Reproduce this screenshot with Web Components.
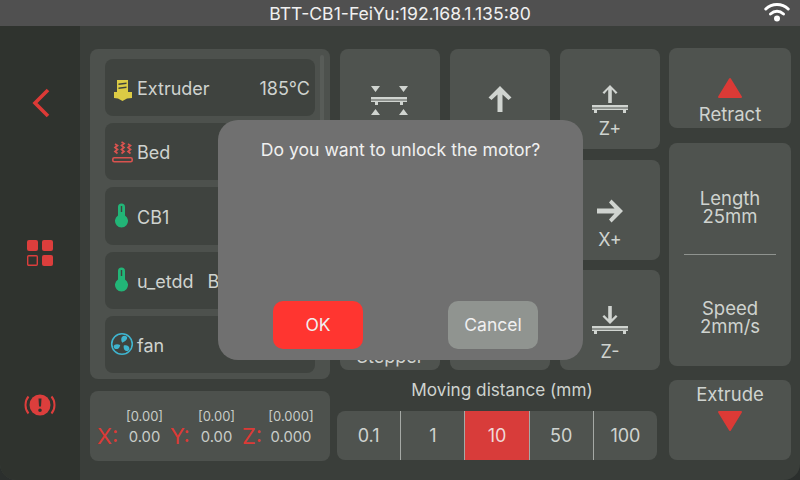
<!DOCTYPE html>
<html>
<head>
<meta charset="utf-8">
<style>
  html, body { margin: 0; padding: 0; background: #2b2f2d; }
  body { width: 800px; height: 480px; overflow: hidden; font-family: "Inter", "Liberation Sans", sans-serif; }
  dialog-box { position: absolute; left: 218px; top: 120px; }
</style>
</head>
<body>
<klipper-screen>
  <status-bar slot="top" title="BTT-CB1-FeiYu:192.168.1.135:80"></status-bar>

  <side-nav slot="nav"></side-nav>

  <panel-box slot="temps" class="temps">
    <temp-row name="Extruder" value="185℃">
      <svg slot="icon" width="24" height="28" viewBox="0 0 24 28"><path fill="#dccb45" d="M8 6h11v12h4v6l-5 .5-4.500 2.500L9 24.500 5 24v-6h3z"/><path fill="#3f433f" d="M9.500 9.500l8-1v1.500l-8 1zM9.500 13.500l8-1v1.500l-8 1z"/></svg>
    </temp-row>
    <temp-row name="Bed">
      <svg slot="icon" width="24" height="28" viewBox="0 0 24 28" fill="none" stroke="#d9534f"><rect x="3.800" y="19.800" width="19.400" height="4" rx="1.500" stroke-width="1.600"/><path stroke-width="1.700" d="M6 6l2.500 1.500L6 9.500l2.500 2L6 13.500l2.500 2M12.500 4l2.500 1.500-2.500 2 2.500 2-2.500 2 2.500 2-2.500 2M19 6l2.500 1.500-2.500 2 2.500 2-2.500 2 2.500 2"/></svg>
    </temp-row>
    <temp-row name="CB1">
      <svg slot="icon" width="24" height="28" viewBox="0 0 24 28"><path fill="#22b577" fill-rule="evenodd" d="M9 5a3.500 3.500 0 0 1 7 0V13.500a6.500 6.500 0 1 1-7 0zM11.800 4h1.400v6h-1.400z"/></svg>
    </temp-row>
    <temp-row name="u_etdd" value="B" inline>
      <svg slot="icon" width="24" height="28" viewBox="0 0 24 28"><path fill="#22b577" fill-rule="evenodd" d="M9 5a3.500 3.500 0 0 1 7 0V13.500a6.500 6.500 0 1 1-7 0zM11.800 4h1.400v6h-1.400z"/></svg>
    </temp-row>
    <temp-row name="fan">
      <svg slot="icon" width="24" height="28" viewBox="0 0 24 28"><circle cx="13" cy="14" r="10.300" fill="none" stroke="#3fb4cf" stroke-width="1.600"/><path fill="#3fb4cf" d="M13.300 12.800C11.500 10 12 5.800 15.500 5.800c3 0 3.500 3 1.300 4.800-1.200 1-2.500 1.400-3.500 2.200zM11.200 15C8.500 13.500 5 14 4.600 16.500c.2 2.500 3 3.300 4.800 2 1.200-.9 1.600-2.400 1.800-3.500zM14.800 15.500c3-.6 6 1 5.600 3.600-.6 2.500-3.800 2.600-5 .6-.8-1.300-.9-3-.6-4.200z"/></svg>
    </temp-row>
  </panel-box>

  <position-box slot="pos"></position-box>

  <move-btn slot="b1">
    <svg width="40" height="36" viewBox="0 0 40 36" fill="#d0d4d0"><path d="M4 1h9l-4.500 6zM32 1h9l-4.500 6zM4 30h9l-4.500-6zM32 30h9l-4.500-6z" transform="translate(-3 0)"/><path d="M1 12h36v2.500H1zM1 15.500h36v1.500H1zM5 17h3v3H5zM30 17h3v3h-3z"/></svg>
  </move-btn>
  <move-btn slot="b2"><svg width="24" height="28" viewBox="0 0 24 28"><path fill="#d0d4d0" d="M12 1l11.500 11.500-3 2.500L14.500 9.500V27h-5V9.500L3.500 15l-3-2.500z"/></svg></move-btn>
  <move-btn slot="b3" label="Z+">
    <svg width="36" height="29" viewBox="0 0 36 29" fill="#d0d4d0"><path d="M18 0l7.500 7.500-1.700 1.500L19.800 4.500V18h-3.600V4.500L12.200 9l-1.700-1.500z"/><path d="M0 20h36v2.500H0zM0 23.500h36V25H0zM2 25h3v3H2zM31 25h3v3h-3z"/></svg>
  </move-btn>
  <move-btn slot="b4"></move-btn>
  <move-btn slot="b5"></move-btn>
  <move-btn slot="b6" label="X+" class="mid" far>
    <svg width="28" height="24" viewBox="0 0 28 24"><path fill="#d0d4d0" d="M27 12L15.500.5 13 3.500 18.500 9.500H1v5h17.500L13 20.500l2.500 3z"/></svg>
  </move-btn>
  <move-btn slot="b7" label="Stepper" low></move-btn>
  <move-btn slot="b8"></move-btn>
  <move-btn slot="b9" label="Z-" far>
    <svg width="36" height="29" viewBox="0 0 36 29" fill="#d0d4d0"><path d="M18 18l7.500-7.500-1.700-1.500-4 4V0h-3.600v13l-4-4-1.700 1.500z"/><path d="M0 20h36v2.500H0zM0 23.500h36V25H0zM2 25h3v3H2zM31 25h3v3h-3z"/></svg>
  </move-btn>

  <distance-bar slot="dist"></distance-bar>

  <extrude-btn slot="retract" label="Retract" dir="up"></extrude-btn>
  <extrude-settings slot="settings"></extrude-settings>
  <extrude-btn slot="extrude" label="Extrude" dir="down"></extrude-btn>
</klipper-screen>

<dialog-box text="Do you want to unlock the motor?"></dialog-box>

<script>
// status bar on top of the screen
class StatusBar extends HTMLElement {
  connectedCallback() {
    const root = this.attachShadow({ mode: 'open' });
    root.innerHTML = `
      <style>
        :host { display: flex; align-items: center; justify-content: center; height: 26px; background: #505050; color: #f0f0f0; font-size: 17.600px; position: relative; }
        svg { position: absolute; right: 10px; top: 1px; }
      </style>
      <span>${this.getAttribute('title')}</span>
      <svg width="26" height="22" viewBox="0 0 26 22" fill="none" stroke="#fff" stroke-width="3" stroke-linecap="round">
        <path d="M1.800 8C8 2 18 2 24.200 8"/>
        <path d="M6.500 13c4-3.600 9-3.600 13 0"/>
        <circle cx="13" cy="17.500" r="3" fill="#fff" stroke="none"/>
      </svg>`;
  }
}
customElements.define('status-bar', StatusBar);

class SideNav extends HTMLElement {
  connectedCallback() {
    const root = this.attachShadow({ mode: 'open' });
    root.innerHTML = `
      <style>
        :host { display: flex; flex-direction: column; align-items: center; width: 80px; height: 454px; background: #2f332e; border-bottom-left-radius: 16px; box-sizing: border-box; padding-top: 62px; }
        svg { display: block; }
        .back { margin-left: 2px; }
        .grid { margin-top: 122px; }
        .warn { margin-top: 127px; }
      </style>
      <svg class="back" width="20" height="30" viewBox="0 0 20 30" fill="none" stroke="#dc3a36" stroke-width="3.600"><path d="M17 2L4 15l13 13"/></svg>
      <svg class="grid" width="26" height="26" viewBox="0 0 26 26">
        <rect x="0" y="0" width="11" height="11" rx="2" fill="#dc3e3c"/>
        <rect x="15" y="0" width="11" height="11" rx="2" fill="#dc3e3c"/>
        <rect x=".7" y="15.700" width="9.600" height="9.600" rx="1" fill="none" stroke="#dc3e3c" stroke-width="1.400"/>
        <rect x="15" y="15" width="11" height="11" rx="2" fill="#dc3e3c"/>
      </svg>
      <svg class="warn" width="32" height="24" viewBox="0 0 32 24">
        <circle cx="16" cy="12" r="10.500" fill="#dc3e3c"/>
        <path d="M14.500 5.500h3l-.5 8h-2zM16 15.500a1.800 1.800 0 1 1 0 3.600 1.800 1.800 0 0 1 0-3.600z" fill="#2f332e"/>
        <path d="M4.500 3.500C.5 8 .5 16 4.500 20.500M27.500 3.500c4 4.500 4 12.500 0 17" fill="none" stroke="#dc3e3c" stroke-width="2"/>
      </svg>`;
  }
}
customElements.define('side-nav', SideNav);

// the panel that holds the temperature rows
class PanelBox extends HTMLElement {
  connectedCallback() {
    const root = this.attachShadow({ mode: 'open' });
    root.innerHTML = `
      <style>
        :host { display: flex; gap: 5px; width: 240px; height: 330px; box-sizing: border-box; background: #4d514d; border-radius: 8px; padding: 6px 6px 6px 15px; }
        .rows { display: flex; flex-direction: column; gap: 7px; padding-top: 4px; width: 210px; }
        .bar { width: 4px; height: 100px; background: #585c58; border-radius: 2px; }
      </style>
      <div class="rows"><slot></slot></div>
      <div class="bar"></div>`;
  }
}
customElements.define('panel-box', PanelBox);

class TempRow extends HTMLElement {
  connectedCallback() {
    const root = this.attachShadow({ mode: 'open' });
    const value = this.getAttribute('value') || '';
    root.innerHTML = `
      <style>
        :host { display: flex; align-items: center; height: 57.500px; box-sizing: border-box; background: #3f433f; border-radius: 8px; color: #cfd3cf; font-size: 18px; padding: 0 5px 0 4px; }
        .icon { display: block; width: 24px; height: 28px; flex: none; margin-right: 4px; }
        .name { flex: ${this.hasAttribute('inline') ? 'none' : '1'}; position: relative; top: 1px; }
        .value { margin-left: ${this.hasAttribute('inline') ? '14px' : '0'}; position: relative; top: 1px; }
      </style>
      <span class="icon"><slot name="icon"></slot></span>
      <span class="name">${this.getAttribute('name')}</span>
      <span class="value">${value}</span>`;
  }
}
customElements.define('temp-row', TempRow);

class PositionBox extends HTMLElement {
  connectedCallback() {
    const root = this.attachShadow({ mode: 'open' });
    const axes = [['X:', '[0.00]', '0.00', 27, 41], ['Y:', '[0.00]', '0.00', 26, 41], ['Z:', '[0.000]', '0.000', 24, 50]];
    root.innerHTML = `
      <style>
        :host { display: flex; width: 240px; height: 70px; box-sizing: border-box; background: #4d514d; border-radius: 8px; padding: 17px 0 0 7px; color: #c8ccc8; gap: 5px; }
        .axis { display: flex; align-items: flex-end; height: 40px; }
        .label { color: #dc3a36; font-size: 22px; line-height: 24px; }
        .vals { display: flex; flex-direction: column; align-items: center; }
        .target { font-size: 13px; line-height: 19px; }
        .now { font-size: 14.800px; line-height: 22px; }
      </style>
      ${axes.map(a => `<div class="axis"><span class="label" style="width:${a[3]}px">${a[0]}</span><div class="vals" style="width:${a[4]}px"><span class="target">${a[1]}</span><span class="now">${a[2]}</span></div></div>`).join('')}`;
  }
}
customElements.define('position-box', PositionBox);

class MoveBtn extends HTMLElement {
  connectedCallback() {
    const root = this.attachShadow({ mode: 'open' });
    const label = this.getAttribute('label') || '';
    root.innerHTML = `
      <style>
        :host { display: flex; flex-direction: column; align-items: center; justify-content: flex-start; width: 100px; box-sizing: border-box; background: #4f534f; border-radius: 8px; color: #cfd3cf; font-size: 18px; padding-top: 36px; }
        :host([low]) { padding-top: 72px; }
        :host(.mid) { padding-top: 39px; }
        ::slotted(svg) { display: block; }
        span { margin-top: 5px; line-height: 20px; }
        :host([far]) span { margin-top: 7px; }
      </style>
      <slot></slot>
      ${label ? `<span>${label}</span>` : ''}`;
  }
}
customElements.define('move-btn', MoveBtn);

class DistanceBar extends HTMLElement {
  connectedCallback() {
    const root = this.attachShadow({ mode: 'open' });
    const opts = ['0.1', '1', '10', '50', '100'];
    root.innerHTML = `
      <style>
        :host { display: block; width: 320px; margin-left: -3px; color: #cfd3cf; }
        .title { text-align: center; font-size: 17.200px; height: 41px; line-height: 40px; padding-left: 10px; }
        .seg { display: flex; height: 49px; border-radius: 8px; overflow: hidden; background: #4f534f; }
        .seg div { flex: 1; display: flex; align-items: center; justify-content: center; font-size: 18px; border-left: 1px solid #a5a9a5; }
        .seg div:first-child { border-left: 0; }
        .seg .on { background: #d83c3a; color: #f0d8d8; }
      </style>
      <div class="title">Moving distance (mm)</div>
      <div class="seg">${opts.map(o => `<div class="${o === '10' ? 'on' : ''}">${o}</div>`).join('')}</div>`;
  }
}
customElements.define('distance-bar', DistanceBar);

class ExtrudeBtn extends HTMLElement {
  connectedCallback() {
    const root = this.attachShadow({ mode: 'open' });
    const up = this.getAttribute('dir') === 'up';
    const tri = up
      ? '<svg width="26" height="22" viewBox="0 0 26 22"><path fill="#dc3a36" stroke="#dc3a36" stroke-width="2" stroke-linejoin="round" d="M13 2L2 20h22z"/></svg>'
      : '<svg width="26" height="22" viewBox="0 0 26 22"><path fill="#dc3a36" stroke="#dc3a36" stroke-width="2" stroke-linejoin="round" d="M13 20L2 2h22z"/></svg>';
    root.innerHTML = `
      <style>
        :host { display: flex; flex-direction: column; align-items: center; width: 122px; height: 80px; box-sizing: border-box; background: #4f534f; border-radius: 8px; color: #cfd3cf; font-size: 18.500px; padding-top: ${up ? 29 : 3}px; }
        svg { display: block; }
        span { line-height: 22px; margin-top: ${up ? 4 : 0}px; }
      </style>
      ${up ? tri + `<span>${this.getAttribute('label')}</span>` : `<span>${this.getAttribute('label')}</span><div style="height:5px"></div>` + tri}`;
  }
}
customElements.define('extrude-btn', ExtrudeBtn);

class ExtrudeSettings extends HTMLElement {
  connectedCallback() {
    const root = this.attachShadow({ mode: 'open' });
    root.innerHTML = `
      <style>
        :host { display: flex; flex-direction: column; width: 122px; height: 223px; box-sizing: border-box; background: #4f534f; border-radius: 8px; color: #cfd3cf; font-size: 18.500px; text-align: center; line-height: 18px; }
        .part { height: 111px; box-sizing: border-box; display: flex; flex-direction: column; justify-content: center; }
        .up { padding-top: 18px; }
        .down { padding-top: 14px; }
        hr { width: 92px; margin: 0 auto; border: 0; border-top: 1px solid #8f938f; }
      </style>
      <div class="part up"><span>Length</span><span>25mm</span></div>
      <hr>
      <div class="part down"><span>Speed</span><span>2mm/s</span></div>`;
  }
}
customElements.define('extrude-settings', ExtrudeSettings);

class DialogBox extends HTMLElement {
  connectedCallback() {
    const root = this.attachShadow({ mode: 'open' });
    root.innerHTML = `
      <style>
        :host { display: flex; flex-direction: column; justify-content: space-between; width: 365px; height: 240px; box-sizing: border-box; background: #707070; border-radius: 20px; color: #f0f0f0; font-size: 17.600px; padding: 20px 45px 11px 55px; }
        .msg { text-align: center; margin-left: -55px; margin-right: -45px; line-height: 20px; }
        .btns { display: flex; justify-content: space-between; }
        .btn { width: 90px; height: 48px; box-sizing: border-box; padding-bottom: 2px; border-radius: 10px; display: flex; align-items: center; justify-content: center; font-size: 17.500px; }
        .ok { background: #ff3530; }
        .cancel { background: #909490; }
      </style>
      <div class="msg">${this.getAttribute('text')}</div>
      <div class="btns"><div class="btn ok">OK</div><div class="btn cancel">Cancel</div></div>`;
  }
}
customElements.define('dialog-box', DialogBox);

// whole screen layout
class KlipperScreen extends HTMLElement {
  constructor() {
    super();
    const root = this.attachShadow({ mode: 'open' });
    root.innerHTML = `
      <style>
        :host { display: flex; flex-direction: column; width: 800px; height: 480px; background: #3a3e3a; border-radius: 0 0 16px 16px; overflow: hidden; }
        .main { display: flex; flex: 1; }
        .left { display: flex; flex-direction: column; gap: 12px; margin: 23px 0 0 10px; width: 240px; }
        .mid { display: flex; flex-direction: column; margin: 23px 0 0 10px; width: 320px; }
        .btns { display: grid; grid-template-columns: repeat(3, 100px); grid-template-rows: 100px 100px 100px; column-gap: 10px; row-gap: 10.500px; }
        .right { display: flex; flex-direction: column; gap: 14.500px; margin: 22px 0 0 9px; width: 122px; }
      </style>
      <slot name="top"></slot>
      <div class="main">
        <slot name="nav"></slot>
        <div class="left"><slot name="temps"></slot><slot name="pos"></slot></div>
        <div class="mid">
          <div class="btns">
            <slot name="b1"></slot><slot name="b2"></slot><slot name="b3"></slot>
            <slot name="b4"></slot><slot name="b5"></slot><slot name="b6"></slot>
            <slot name="b7"></slot><slot name="b8"></slot><slot name="b9"></slot>
          </div>
          <slot name="dist"></slot>
        </div>
        <div class="right"><slot name="retract"></slot><slot name="settings"></slot><slot name="extrude"></slot></div>
      </div>`;
  }
}
customElements.define('klipper-screen', KlipperScreen);
</script>
</body>
</html>
